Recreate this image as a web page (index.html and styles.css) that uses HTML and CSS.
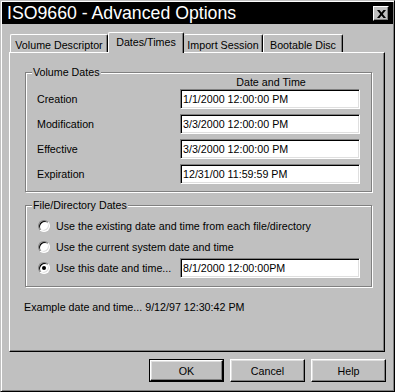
FILE: index.html
```html
<!DOCTYPE html>
<html lang="en">
<head>
    <meta charset="UTF-8">
    <title>ISO9660 - Advanced Options</title>
    <link rel="stylesheet" href="styles.css">
</head>
<body>
    <div class="window">
        <div class="titlebar">
            <span class="title">ISO9660 - Advanced Options</span>
            <div class="close">
                <svg width="9" height="8" viewBox="0 0 9 8"><path d="M0 0h2.5l2 2.5 2-2.5H9L5.8 4 9 8H6.5l-2-2.5-2 2.5H0l3.2-4z" fill="#000"/></svg>
            </div>
        </div>
        <div class="tabs">
            <div class="tab tab-vd">Volume Descriptor</div>
            <div class="tab tab-dt selected">Dates/Times</div>
            <div class="tab tab-is">Import Session</div>
            <div class="tab tab-bd">Bootable Disc</div>
        </div>
        <div class="panel">
            <div class="group group-volume">
                <span class="group-title">Volume Dates</span>
                <div class="col-head">Date and Time</div>
                <div class="row"><span class="label">Creation</span><div class="field">1/1/2000 12:00:00 PM</div></div>
                <div class="row"><span class="label">Modification</span><div class="field">3/3/2000 12:00:00 PM</div></div>
                <div class="row"><span class="label">Effective</span><div class="field">3/3/2000 12:00:00 PM</div></div>
                <div class="row"><span class="label">Expiration</span><div class="field">12/31/00 11:59:59 PM</div></div>
            </div>
            <div class="group group-files">
                <span class="group-title">File/Directory Dates</span>
                <div class="radio-row"><span class="radio"></span><span class="radio-text">Use the existing date and time from each file/directory</span></div>
                <div class="radio-row"><span class="radio"></span><span class="radio-text">Use the current system date and time</span></div>
                <div class="radio-row last"><span class="radio checked"></span><span class="radio-text label-short">Use this date and time...</span><div class="field">8/1/2000 12:00:00PM</div></div>
            </div>
            <p class="example">Example date and time... 9/12/97 12:30:42 PM</p>
        </div>
        <div class="buttons">
            <div class="default-frame"><div class="button">OK</div></div>
            <div class="button">Cancel</div>
            <div class="button">Help</div>
        </div>
    </div>
</body>
</html>
```

FILE: styles.css
```css
body {
    margin: 0;
    padding: 0;
    background-color: #c0c0c0;
    font-family: 'Liberation Sans', Arial, sans-serif;
    font-size: 10.7px;
    color: #000;
}
.window {
    width: 395px;
    height: 392px;
    box-sizing: border-box;
    padding: 1px;
    background-color: #c0c0c0;
    border: 1px solid;
    border-color: #c0c0c0 #000 #000 #c0c0c0;
    box-shadow: inset 1px 1px #fff, inset -1px -1px #808080;
    display: flex;
    flex-direction: column;
}
.titlebar {
    height: 22px;
    background-color: #000;
    color: #fff;
    display: flex;
    align-items: center;
    justify-content: space-between;
    padding: 0 4px 0 5px;
}
.title {
    font-size: 17.7px;
    line-height: 22px;
}
.close {
    width: 16px;
    height: 15px;
    box-sizing: border-box;
    background-color: #c0c0c0;
    border: 1px solid;
    border-color: #fff #000 #000 #fff;
    box-shadow: inset -1px -1px #808080;
    display: flex;
    align-items: center;
    justify-content: center;
    margin-top: 1px;
}
.tabs {
    display: flex;
    align-items: flex-end;
    height: 20px;
    margin-top: 8px;
    padding-left: 8px;
}
.tab {
    height: 18px;
    box-sizing: border-box;
    padding-top: 3px;
    line-height: 14px;
    text-align: center;
    white-space: nowrap;
    border-top: 1px solid #fff;
    border-left: 1px solid #fff;
    border-right: 1px solid #000;
    box-shadow: inset -1px 0 #808080;
    border-radius: 2px 2px 0 0;
    background-color: #c0c0c0;
}
.tab-vd { width: 98px; }
.tab-dt { width: 76px; }
.tab-is { width: 79px; border-left: none; }
.tab-bd { width: 80px; }
.tab.selected {
    height: 21px;
    margin-bottom: -1px;
    padding-top: 2px;
    position: relative;
    z-index: 1;
}
.panel {
    margin: 0 8px 0 7px;
    height: 300px;
    box-sizing: border-box;
    border: 1px solid;
    border-color: #fff #000 #000 #fff;
    box-shadow: inset -1px -1px #808080;
    padding: 19px 12px 0 15px;
}
.group {
    position: relative;
    box-sizing: border-box;
    border: 1px solid #808080;
    box-shadow: inset 1px 1px #fff, 1px 1px #fff;
}
.group-title {
    position: absolute;
    top: -8px;
    left: 6px;
    padding: 0 1px;
    line-height: 14px;
    background-color: #c0c0c0;
}
.group-volume {
    height: 120px;
    padding: 2px 9px 0 11px;
    display: flex;
    flex-direction: column;
    gap: 5px;
}
.col-head {
    line-height: 14px;
    margin-bottom: -5px;
    padding-left: 143px;
    text-align: center;
}
.row {
    display: flex;
    align-items: center;
    height: 20px;
}
.label {
    width: 143px;
}
.field {
    width: 180px;
    height: 20px;
    box-sizing: border-box;
    background-color: #fff;
    border: 1px solid;
    border-color: #808080 #fff #fff #808080;
    box-shadow: inset 1px 1px #000, inset -1px -1px #dfdfdf;
    padding: 0 2px;
    line-height: 18px;
    white-space: nowrap;
}
.group-files {
    margin-top: 13px;
    height: 82px;
    padding: 9px 9px 0 12px;
}
.radio-row {
    display: flex;
    align-items: center;
    height: 21px;
    white-space: nowrap;
}
.radio-row.last {
    height: 22px;
}
.radio {
    width: 12px;
    height: 12px;
    box-sizing: border-box;
    border-radius: 50%;
    background-color: #fff;
    border: 1px solid;
    border-color: #808080 #fff #fff #808080;
    box-shadow: inset 1px 1px #000, inset -1px -1px #dfdfdf;
    display: flex;
    align-items: center;
    justify-content: center;
    margin-right: 6px;
}
.radio.checked::after {
    content: "";
    width: 4px;
    height: 4px;
    border-radius: 50%;
    background-color: #000;
}
.label-short {
    width: 124px;
}
.example {
    margin: 13px 0 0 -1px;
    line-height: 14px;
}
.buttons {
    display: flex;
    justify-content: flex-end;
    gap: 6px;
    margin-top: 7px;
    padding-right: 7px;
}
.button {
    width: 75px;
    height: 23px;
    box-sizing: border-box;
    border: 1px solid;
    border-color: #fff #000 #000 #fff;
    box-shadow: inset -1px -1px #808080, inset 1px 1px #dfdfdf;
    display: flex;
    align-items: center;
    justify-content: center;
}
.default-frame {
    border: 1px solid #000;
    width: 75px;
    height: 23px;
    box-sizing: border-box;
}
.default-frame .button {
    width: 73px;
    height: 21px;
}
```
